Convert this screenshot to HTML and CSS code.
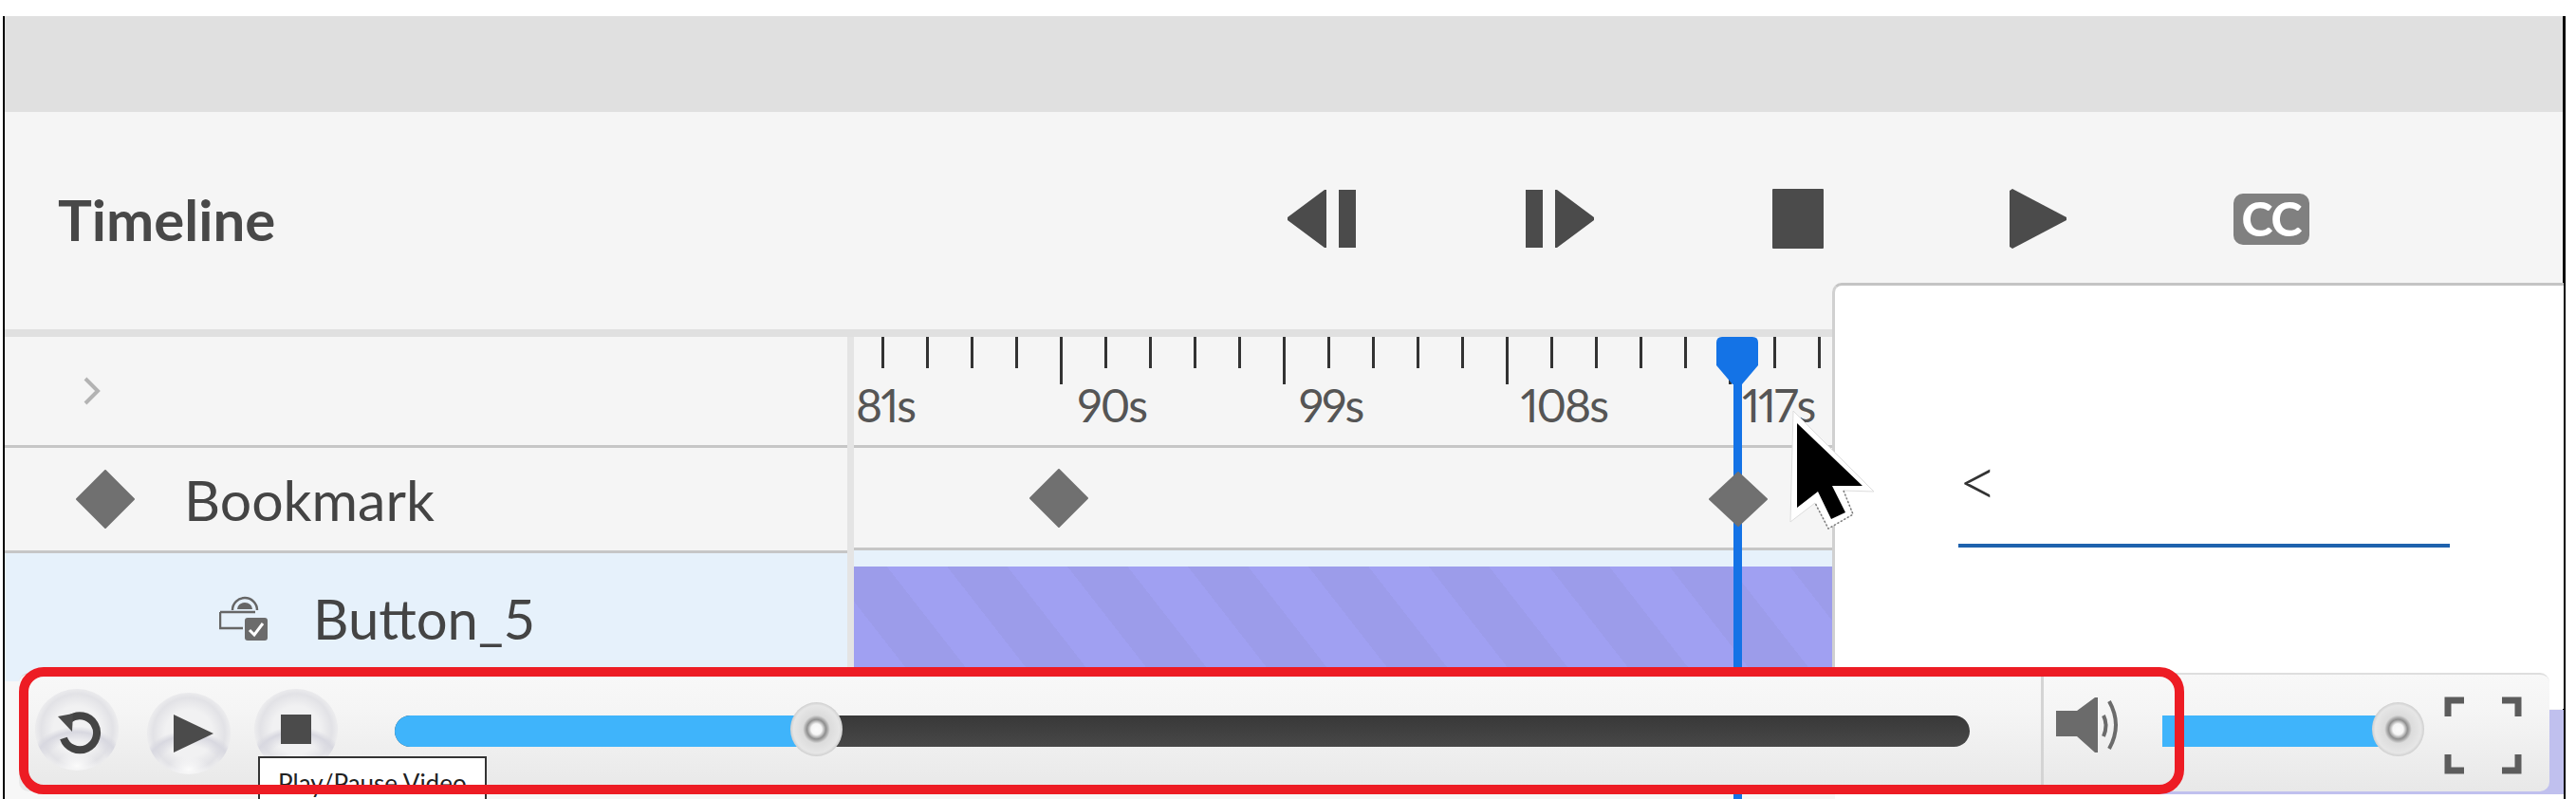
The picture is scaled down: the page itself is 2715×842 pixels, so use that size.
FILE: index.html
```html
<!DOCTYPE html>
<html>
  <head>
    <meta charset="utf-8">
    <title>Timeline</title>
    <link rel="stylesheet" href="styles.css">
  </head>
  <body>
    <div class="stage">
      <div class="app">
        <div class="band"></div>

        <div class="header">
          <h2 class="title">Timeline</h2>
          <div class="transport">
            <div class="transport-btn">
              <svg width="74" height="63" viewBox="0 0 74 63"><path class="ico" d="M42 1 L42 62 L40 62 L1 33 L1 30 L40 1 Z M55 1 H73 V62 H55 Z"/></svg>
            </div>
            <div class="transport-btn">
              <svg width="74" height="63" viewBox="0 0 74 63"><path class="ico" d="M32 1 L32 62 L34 62 L73 33 L73 30 L34 1 Z M1 1 H19 V62 H1 Z"/></svg>
            </div>
            <div class="transport-btn">
              <svg width="54" height="63" viewBox="0 0 54 63"><rect class="ico" width="54" height="63" rx="1"/></svg>
            </div>
            <div class="transport-btn transport-btn-play">
              <svg width="62" height="63" viewBox="0 0 62 63"><path class="ico" d="M1 2 L4 0 L61 30 V33 L4 63 L1 61 Z"/></svg>
            </div>
            <div class="transport-btn transport-btn-cc">
              <span class="cc">CC</span>
            </div>
          </div>
        </div>

        <div class="divider"></div>

        <div class="timeline">
          <div class="tree">
            <div class="tree-head">
              <svg width="20" height="32" viewBox="0 0 20 32"><path class="chevron" d="M3 3 L16 16 L3 29"/></svg>
            </div>
            <div class="tree-row">
              <svg class="diamond" width="62" height="62" viewBox="0 0 62 62"><path d="M31 1 L61 31 L31 61 L1 31 Z"/></svg>
              <span class="row-name">Bookmark</span>
            </div>
            <div class="tree-row tree-row-selected">
              <svg class="button-ico" width="52" height="49" viewBox="0 0 52 49">
                <path class="button-ico-line" d="M14 16 A13 13 0 0 1 40 16 M1 18 H38 M1 18 V35 H25"/>
                <path d="M19 15 A8 7 0 0 1 35 15 Z" fill="#666"/>
                <rect x="27" y="24" width="24" height="24" rx="3" fill="#6b6b6b"/>
                <path d="M32 37 L37 42 L46 30" fill="none" stroke="#fff" stroke-width="3"/>
              </svg>
              <span class="row-name">Button_5</span>
            </div>
          </div>

          <div class="lanes">
            <div class="ruler">
              <div class="ticks">
                <i></i><i></i><i></i><i></i><i class="long"></i>
                <i></i><i></i><i></i><i></i><i class="long"></i>
                <i></i><i></i><i></i><i></i><i class="long"></i>
                <i></i><i></i><i></i><i></i><i class="long"></i>
                <i></i><i></i>
              </div>
              <div class="ruler-labels">
                <span>81s</span><span>90s</span><span>99s</span><span>108s</span><span>117s</span>
              </div>
            </div>
            <div class="lane-marks">
              <svg class="diamond mark-first" width="62" height="62" viewBox="0 0 62 62"><path d="M31 1 L61 31 L31 61 L1 31 Z"/></svg>
            </div>
            <div class="lane-track">
              <div class="clip"></div>
            </div>
          </div>
        </div>
      </div>

      <!-- playhead over the lanes -->
      <div class="playhead">
        <div class="playhead-line"></div>
        <svg class="playhead-cap" width="44" height="50" viewBox="0 0 44 50"><path d="M6 0 H38 Q44 0 44 6 V30 L27 50 H17 L0 30 V6 Q0 0 6 0 Z"/></svg>
      </div>
      <svg class="diamond mark-current" width="62" height="58" viewBox="0 0 62 58"><path d="M31 1 L61 29 L31 57 L1 29 Z"/></svg>

      <!-- properties panel -->
      <div class="panel">
        <div class="panel-field"><span class="panel-value">&lt;</span></div>
      </div>
      <div class="panel-foot"></div>

      <!-- video player skin -->
      <div class="player">
        <div class="round-btn">
          <svg class="replay-ico" width="52" height="50" viewBox="0 0 52 50"><path class="replay" d="M16 11 A18 18 0 1 1 10 31"/><path class="ico" d="M4 8 L20 5 L19 24 Z"/></svg>
        </div>
        <div class="round-btn round-btn-play">
          <svg class="play-ico" width="42" height="40" viewBox="0 0 42 40"><path class="ico" d="M0 0 L42 20 L0 40 Z"/></svg>
        </div>
        <div class="round-btn round-btn-stop">
          <svg width="32" height="31" viewBox="0 0 32 31"><rect class="ico" width="32" height="31"/></svg>
        </div>
        <div class="seek">
          <div class="seek-fill" style="width: 26.8%"></div>
          <div class="thumb" style="left: 26.8%"></div>
        </div>
        <div class="player-sep"></div>
        <svg class="speaker" width="70" height="60" viewBox="0 0 70 60">
          <path class="speaker-body" d="M0 15 H22 L41 1 H44 V59 H41 L22 42 H0 Z"/>
          <path class="speaker-wave" d="M50 20 Q55 30 50 42 M56 5 Q70 30 56 55"/>
        </svg>
        <div class="volume">
          <div class="thumb thumb-end"></div>
        </div>
        <svg class="fullscreen" width="82" height="82" viewBox="0 0 82 82">
          <path d="M4 21 V4 H21 M61 4 H78 V21 M4 61 V78 H21 M61 78 H78 V61"/>
        </svg>
      </div>

      <div class="tooltip">Play/Pause Video</div>
      <div class="callout"></div>

      <svg class="cursor" width="95" height="130" viewBox="0 0 95 130">
        <path d="M5 3 L90 88 L58 87 L68 112 L42 127 L28 100 L2 120 Z" fill="#fff" stroke="#ddd" stroke-width="1"/>
        <path d="M58 87 L68 112 L42 127 L28 100" fill="none" stroke="#777" stroke-width="1.500" stroke-dasharray="2 2"/>
        <path d="M9 16 L78 82 L46 82 L60 110 L45 117 L31 88 L9 105 Z" fill="#000"/>
      </svg>
    </div>
  </body>
</html>
```

FILE: styles.css
```css
body {
  margin: 0;
  background-color: #fff;
  font-family: 'Lato', sans-serif;
  color: #444;
}

.stage {
  position: relative;
  width: 2715px;
  height: 842px;
  overflow: hidden;
}

.app {
  box-sizing: border-box;
  width: 2701px;
  height: 825px;
  margin: 17px 0 0 3px;
  border-left: 2px solid #000;
  border-right: 3px solid #000;
  background-color: #f5f5f5;
}

.band {
  height: 101px;
  background-color: #e0e0e0;
}

.header {
  box-sizing: border-box;
  display: flex;
  align-items: center;
  height: 229px;
  padding: 0 0 4px 56px;
}

.title {
  width: 1206px;
  margin: 0;
  font-size: 60px;
  font-weight: 700;
  color: #484848;
}

.transport {
  display: flex;
}

.transport-btn {
  display: flex;
  align-items: center;
  justify-content: center;
  width: 251px;
}

.transport-btn-play svg {
  margin-left: 4px;
}

.transport-btn-cc .cc {
  margin-right: 5px;
}

.ico {
  fill: #4b4b4b;
}

.cc {
  width: 80px;
  height: 54px;
  border-radius: 10px;
  background-color: #808080;
  color: #fff;
  font-size: 50px;
  font-weight: 900;
  letter-spacing: -1px;
  line-height: 53px;
  text-align: center;
}

.divider {
  height: 8px;
  background-color: #e0e0e0;
}

.timeline {
  display: flex;
  align-items: flex-start;
  height: 487px;
  background-color: #f7f7f7;
}

.tree {
  width: 888px;
  border-right: 7px solid #e4e4e4;
  background-color: #f5f5f5;
}

.tree-head {
  display: flex;
  align-items: center;
  height: 114px;
  padding-left: 82px;
  border-bottom: 3px solid #c6c6c6;
}

.chevron {
  fill: none;
  stroke: #b3b3b3;
  stroke-width: 4;
}

.tree-row {
  display: flex;
  align-items: center;
  height: 108px;
  padding-left: 75px;
  border-bottom: 3px solid #c6c6c6;
}

.tree-row-selected {
  align-items: flex-start;
  height: 135px;
  padding-left: 226px;
  border-bottom: none;
  background-color: #e6f1fb;
}

.diamond path {
  fill: #707070;
  stroke: #707070;
  stroke-linejoin: round;
  stroke-width: 2;
}

.row-name {
  margin-left: 52px;
  font-size: 59px;
  color: #444;
}

.tree-row-selected .row-name {
  margin-left: 47px;
  margin-top: 34px;
  font-size: 58px;
}

.button-ico {
  margin-top: 44px;
}

.button-ico-line {
  fill: none;
  stroke: #666;
  stroke-width: 2.500;
}

.lanes {
  flex: 1;
  min-width: 0;
  background-color: #f5f5f5;
}

.ruler {
  height: 114px;
  border-bottom: 3px solid #c6c6c6;
  overflow: hidden;
}

.ticks {
  display: flex;
  height: 50px;
  padding-left: 29px;
}

.ticks i {
  box-sizing: border-box;
  display: block;
  width: 47px;
  height: 33px;
  border-left: 3px solid #333;
}

.ticks i.long {
  height: 50px;
}

.ruler-labels {
  display: flex;
  padding-left: 2px;
  font-size: 48px;
  font-variant-numeric: proportional-nums;
  letter-spacing: -2px;
  line-height: 44px;
  color: #555;
}

.ruler-labels span {
  width: 233.500px;
}

.lane-marks {
  display: flex;
  align-items: center;
  height: 105px;
  border-bottom: 3px solid #c6c6c6;
}

.mark-first {
  margin-left: 185px;
}

.mark-current {
  position: absolute;
  top: 497px;
  left: 1801px;
}

.lane-track {
  box-sizing: border-box;
  height: 135px;
  padding-top: 17px;
  background-color: #e6f1fb;
}

.clip {
  height: 100%;
  background-image: repeating-linear-gradient(52deg, #a0a0f2 0, #a0a0f2 50px, #9c9cea 50px, #9c9cea 100px);
}

.playhead {
  position: absolute;
  top: 355px;
  left: 1809px;
  width: 44px;
  height: 487px;
}

.playhead-line {
  width: 9px;
  height: 100%;
  margin-left: 18px;
  background-color: #1473e6;
}

.playhead-cap {
  position: absolute;
  top: 0;
  left: 0;
  fill: #1473e6;
}

.panel {
  box-sizing: border-box;
  position: absolute;
  top: 298px;
  left: 1931px;
  width: 771px;
  height: 449px;
  padding: 180px 0 0 130px;
  border-top: 3px solid #c4c4c4;
  border-left: 3px solid #d0d0d0;
  border-top-left-radius: 10px;
  background-color: #fff;
}

.panel-field {
  box-sizing: border-box;
  width: 518px;
  height: 96px;
  border-bottom: 4px solid #1f62ad;
}

.panel-value {
  font-size: 72px;
  font-weight: 300;
  line-height: 50px;
  color: #333;
}

.panel-foot {
  box-sizing: border-box;
  position: absolute;
  top: 748px;
  left: 1934px;
  width: 768px;
  height: 94px;
  border-bottom: 5px solid #fff;
  background-color: #c0c0ee;
}

.player {
  box-sizing: border-box;
  position: absolute;
  top: 709px;
  left: 20px;
  display: flex;
  align-items: center;
  width: 2667px;
  height: 125px;
  padding: 0 0 4px 17px;
  border-top: 2px solid #dedede;
  border-radius: 10px;
  background-image: linear-gradient(#f8f8f8, #f5f5f5 30%, #e8e8e8 100%);
}

.round-btn {
  display: flex;
  align-items: center;
  justify-content: center;
  flex: none;
  width: 88px;
  height: 86px;
  margin-bottom: 4px;
  border-radius: 50%;
  background-image: radial-gradient(ellipse 26% 16% at 50% 94%, #fbfbfb 0, rgba(251, 251, 251, 0) 100%),
    radial-gradient(ellipse 60% 48% at 50% 94%, rgba(214, 214, 222, 0) 60%, #d8d8e0 86%, rgba(214, 214, 222, 0) 100%),
    radial-gradient(circle closest-side, #f1f1f2 58%, #e2e2e6 88%, #ebebed 100%);
}

.round-btn-play {
  margin: 4px 0 0 30px;
}

.round-btn-stop {
  margin-left: 25px;
}

.replay-ico {
  margin: 7px 0 0 3px;
}

.play-ico {
  margin-left: 9px;
}

.seek {
  position: relative;
  flex: none;
  width: 1660px;
  height: 33px;
  margin-left: 60px;
  border-radius: 17px;
  background-image: linear-gradient(#383838, #484848);
}

.seek-fill {
  height: 100%;
  border-radius: 17px 0 0 17px;
  background-color: #3fb4fb;
}

.thumb {
  position: absolute;
  top: -14px;
  width: 55px;
  height: 57px;
  margin-left: -28px;
  border-radius: 50%;
  background-image: radial-gradient(closest-side, #fbfbfb 0, #f6f6f6 20%, #8f8f8f 36%, #a8a8a8 42%, #dcdcdc 52%, #e6e6e6 88%, #cfcfcf 100%);
}

.thumb-end {
  left: 249px;
}

.replay {
  fill: none;
  stroke: #444;
  stroke-width: 8;
}

.player-sep {
  align-self: stretch;
  flex: none;
  width: 3px;
  margin: 0 0 -4px 75px;
  background-color: #d4d4d4;
}

.speaker {
  flex: none;
  margin: 0 0 14px 13px;
}

.speaker-body {
  fill: #6b6b6b;
}

.speaker-wave {
  fill: none;
  stroke: #6b6b6b;
  stroke-width: 4;
}

.volume {
  position: relative;
  flex: none;
  width: 249px;
  height: 33px;
  margin-left: 42px;
  background-color: #3fb4fb;
}

.fullscreen {
  flex: none;
  margin: 8px 0 0 48px;
}

.fullscreen path {
  fill: none;
  stroke: #5c5c5c;
  stroke-width: 7;
}

.tooltip {
  box-sizing: border-box;
  position: absolute;
  top: 797px;
  left: 272px;
  width: 241px;
  height: 60px;
  padding: 10px 0 0 19px;
  border: 2px solid #333;
  background-color: #fff;
  font-size: 26px;
  color: #222;
}

.callout {
  box-sizing: border-box;
  position: absolute;
  top: 703px;
  left: 20px;
  width: 2282px;
  height: 134px;
  border: 10px solid #ed1c24;
  border-radius: 26px;
}

.cursor {
  position: absolute;
  top: 430px;
  left: 1885px;
}
```
